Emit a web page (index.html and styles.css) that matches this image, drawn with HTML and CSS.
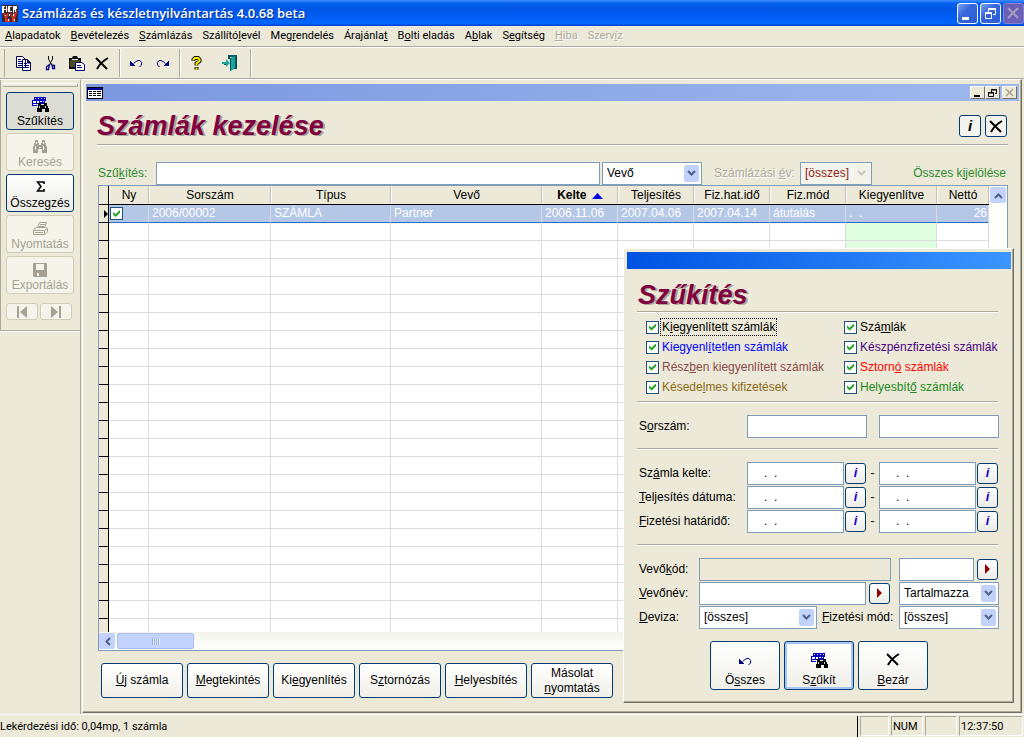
FILE: index.html
```html
<!DOCTYPE html>
<html lang="hu">
<head>
<meta charset="utf-8">
<title>Számlázás és készletnyilvántartás</title>
<link rel="stylesheet" href="styles.css">
</head>
<body>
<svg class="defs" aria-hidden="true">
  <symbol id="i-find" viewBox="0 0 17 16"><path fill="#0000c8" d="M2 0h12v4H13v3H1V9H0V3h2z"/><path fill="#fff" d="M3 1h1v1H3zM6 1h1v1H6zM9 1h1v1H9zM12 1h1v1h-1zM1 4h3v2H1zM5 4h2v2H5zM8 4h2v1H8zM11 4h1v1h-1zM1 7h3v1H1z"/><path fill="#0000c8" d="M0 8h5v1H0z"/><path fill="#000" d="M6 6h3v2h3V6h3v3h1v2h1v4h-4v-3h-3v3H5v-4h1z"/><path fill="#ccc" d="M7 9h1v2H7zM13 9h1v2h-1z"/></symbol>
  <symbol id="i-bino" viewBox="0 0 16 14"><path fill="currentColor" d="M3 0h3v3h1v2h2V3h1V0h3v3h1v3h1v7h-5V9H6v4H1V6h1V3h1z"/><path fill="#f4f3ea" d="M4 2h1v2H4zM3 6h1v4H3zM11 2h1v2h-1zM11 6h1v4h-1zM7 7h2v1H7z"/></symbol>
  <symbol id="i-x" viewBox="0 0 14 13"><path d="M1 1l11 11M13 1C8 4 4 8 2 12" fill="none" stroke="currentColor" stroke-width="2"/></symbol>
  <symbol id="i-undo" viewBox="0 0 13 9"><path fill="#000080" d="M0 2h1v1h1v1h1v1h1v1h1v1H0z"/><path d="M3.500 4.500L6 2.500Q8 1 10 1.500Q12.500 3 11.500 6L9.500 8" fill="none" stroke="#000080" stroke-width="1"/></symbol>
  <symbol id="i-down" viewBox="0 0 9 7"><path d="M1 1l3.500 3.500L8 1" fill="none" stroke="currentColor" stroke-width="2"/></symbol>
</svg>
<div class="app">
  <header class="titlebar">
    <svg class="logo" viewBox="0 0 16 17"><path fill="#382828" d="M0 0h16v17H0z"/><path fill="#fff" d="M0 1h3v1H2v2h2V1h1v6H4V5H2v3H0zM6 1h4v1H8v4h2v1H6zM11 1h4v3h-1v3h-1V5h-1v3h-1z"/><path fill="#d83028" d="M1 9l2-1 1 3 1-3h2l-2 5v4H3v-4zM8 8l2 1 1 3 1-4h3l-2 6v3h-3v-3zM5 3h1v3H5zM14 5h1v3h-1zM5 14h3v3H5z"/><path fill="#fff" d="M3 10h1v1H3zM7 9h1v2H7zM11 9h1v2h-1zM6 14h1v2H6zM12 14h1v2h-1z"/></svg>
    <h1 class="app-name">Számlázás és készletnyilvántartás 4.0.68 beta</h1>
    <div class="caption-buttons">
      <button class="cap" aria-label="Kis méret"><svg viewBox="0 0 19 19"><path fill="#fff" d="M4 13h7v3H4z"/></svg></button>
      <button class="cap" aria-label="Visszaállítás"><svg viewBox="0 0 19 19"><path fill="none" stroke="#fff" d="M7.500 8V4.500h7v6H12M7 5.500h8M4.500 8.500h6v6h-6zM4 9.500h7"/></svg></button>
      <button class="cap cap-off" aria-label="Bezárás" disabled><svg viewBox="0 0 19 19"><path stroke="#a99cc4" stroke-width="2" d="M4 4l10 10M14 4L4 14"/></svg></button>
    </div>
  </header>
  <nav class="menubar">
    <button><u>A</u>lapadatok</button><button><u>B</u>evételezés</button><button><u>S</u>zámlázás</button><button>Szállító<u>l</u>evél</button><button>Meg<u>r</u>endelés</button><button>Árajánla<u>t</u></button><button>B<u>o</u>lti eladás</button><button>A<u>b</u>lak</button><button>S<u>e</u>gítség</button><button disabled><u>H</u>iba</button><button disabled>Szerv<u>í</u>z</button>
  </nav>
  <div class="toolbar">
    <div class="tool-group first">
      <button aria-label="Másolás"><svg width="16" height="15" viewBox="0 0 16 15"><path fill="#fff" stroke="#000050" d="M.5.500h6l3 3v8h-9zM6.500 3.500h5l3 3v8h-8z"/><path stroke="#000080" d="M2 3.500h3M2 5.500h4M2 7.500h4M2 9.500h4M8 7.500h3M8 9.500h5M8 11.500h5M11.500 4v3H15"/></svg></button>
      <button aria-label="Kivágás"><svg width="11" height="15" viewBox="0 0 11 15"><path fill="none" stroke="#111" d="M3.500 0v3l3 6M7.500 0v3l-3 6"/><path fill="none" stroke="#000080" stroke-width="1.300" d="M4.500 8L4 10.500 3.500 13.500H1.500V10.500L4 9M6.500 7.500L7 9.500H9.500V12.500H7.500V9.500"/></svg></button>
      <button aria-label="Beillesztés"><svg width="17" height="15" viewBox="0 0 17 15"><path fill="#111" d="M1 2h3l1-2h4l1 2h3v11H1z"/><path fill="#4b4b20" d="M2 4h10v7H2z"/><path fill="#ddd" d="M4 3h6v1H4z"/><path fill="#fff" stroke="#000080" d="M7.500 6.500h6l3 2v6h-9z"/><path stroke="#000080" d="M9 9.500h4M9 11.500h5"/></svg></button>
      <button aria-label="Törlés"><svg width="14" height="13"><use href="#i-x"/></svg></button>
    </div>
    <div class="tool-group second">
      <button aria-label="Visszavonás"><svg width="13" height="9"><use href="#i-undo"/></svg></button>
      <button aria-label="Mégis"><svg class="flip" width="13" height="9"><use href="#i-undo"/></svg></button>
    </div>
    <div class="tool-group last">
      <button aria-label="Súgó"><svg width="11" height="15" viewBox="0 0 11 15"><path d="M2.500 5V3.500L4 2h3l1.500 1.500V5L5.500 7.500V9.500M5.500 11v2.500" fill="none" stroke="#111" stroke-width="4"/><path d="M2.500 4.500V3.500L4 2h3l1.500 1.500V5L5.500 7.500V9.500M5.500 11.500v2" fill="none" stroke="#f4ee00" stroke-width="2"/></svg></button>
      <button aria-label="Kilépés"><svg width="16" height="16" viewBox="0 0 16 16"><path fill="#0a5d60" d="M6 0h9v14h-3V2H6z"/><path fill="#19a5a0" d="M8 3l5-2v12l-4 3H8zM0 7h4V4l4 4-4 4V9H0z"/><path fill="#084848" d="M6 1h2v3H6zM8 3h1v12H8zM14 1h1v13h-1zM2 9h2v1H2z"/></svg></button>
    </div>
  </div>
  <div class="workspace">
    <aside class="sidebar">
      <div class="side-panel">
        <div class="grip"></div>
        <button class="side-btn pressed"><svg width="17" height="16"><use href="#i-find"/></svg>Szűkítés</button>
        <button class="side-btn" disabled><svg width="16" height="14"><use href="#i-bino"/></svg>Keresés</button>
        <button class="side-btn sum"><svg width="9" height="11" viewBox="0 0 9 11"><path d="M8 3V1H1.500L5 5.500 1.500 10H8V8" fill="none" stroke="#000" stroke-width="1.600"/></svg>Összegzés</button>
        <button class="side-btn" disabled><svg width="16" height="14" viewBox="0 0 16 14"><path fill="none" stroke="currentColor" d="M5.500 5.500L7.500.500h7l-2 5M8 2.500h5M7 4.500h5M1.500 7.500l3-2h9l2 1v3l-3 3h-11zM1.500 8.500h11v4M13 8l2-1M3 10.500h8"/></svg>Nyomtatás</button>
        <button class="side-btn" disabled><svg width="14" height="14" viewBox="0 0 14 14"><path fill="currentColor" fill-rule="evenodd" d="M0 0h14v14H1L0 13zM3 1v6h8V1zM4 10v3h2v-3z"/></svg>Exportálás</button>
        <div class="nav-pair">
          <button disabled aria-label="Első"><svg width="12" height="12" viewBox="0 0 12 12"><path fill="currentColor" d="M1 0h2v12H1zM11 0v12L4 6z"/></svg></button>
          <button disabled aria-label="Utolsó"><svg width="12" height="12" viewBox="0 0 12 12"><path fill="currentColor" d="M9 0h2v12H9zM1 0v12l7-6z"/></svg></button>
        </div>
      </div>
    </aside>
    <main class="window">
      <div class="window-title">
        <svg width="16" height="12" viewBox="0 0 16 12"><path fill="#000" d="M0 0h16v12H0z"/><path fill="#0000a0" d="M1 1h14v2H1z"/><path fill="#fff" d="M1 3h14v8H1z"/><path fill="#000" d="M2 4h3v1H2zM6 4h3v1H6zM10 4h4v1h-4zM2 6h3v1H2zM6 6h3v1H6zM10 6h4v1h-4zM2 8h3v1H2zM6 8h3v1H6zM10 8h4v1h-4z"/></svg>
        <div class="mini-buttons">
          <button aria-label="Kis méret"><svg viewBox="0 0 13 11"><path fill="#000" d="M3 8h6v2H3z"/></svg></button>
          <button aria-label="Visszaállítás"><svg viewBox="0 0 13 11"><path fill="none" stroke="#000" d="M5.500 5V2.500h5v4H9M5 3h6M2.500 5.500h5v4h-5zM2 6h6"/></svg></button>
          <button class="apart" disabled aria-label="Bezárás"><svg viewBox="0 0 13 11"><path stroke="#aaa58f" stroke-width="1.500" d="M3 2l7 7M10 2L3 9"/></svg></button>
        </div>
      </div>
      <div class="window-body">
        <div class="heading-row">
          <h2>Számlák kezelése</h2>
          <button class="square info-dark">i</button>
          <button class="square" aria-label="Bezár"><svg width="14" height="13"><use href="#i-x"/></svg></button>
        </div>
        <div class="filter-row">
          <label class="green" for="q">Szű<u>k</u>ítés:</label>
          <input id="q" class="box grow" type="text">
          <span class="select w100"><select aria-label="Mező"><option>Vevő</option></select><svg><use href="#i-down"/></svg></span>
          <label class="muted year" for="year">Számlázási <u>é</u>v:</label>
          <span class="select off w72"><select id="year" disabled><option>[összes]</option></select><svg><use href="#i-down"/></svg></span>
          <a class="green" href="#">Összes k<u>i</u>jelölése</a>
        </div>
        <div class="grid">
          <div class="grid-main">
            <div class="grid-view">
              <table>
                <colgroup><col class="c10"><col class="c40"><col class="c122"><col class="c120"><col><col class="c76"><col class="c76"><col class="c76"><col class="c76"><col class="c91"><col class="c52"></colgroup>
                <thead><tr><th></th><th>Ny</th><th>Sorszám</th><th>Típus</th><th>Vevő</th><th class="sorted">Kelte <svg width="11" height="6" viewBox="0 0 11 6"><path fill="#0000e0" d="M5.500 0L11 6H0z"/></svg></th><th>Teljesítés</th><th>Fiz.hat.idő</th><th>Fiz.mód</th><th>Kiegyenlítve</th><th>Nettó</th></tr></thead>
                <tbody id="rows">
                  <tr class="selected"><td><svg width="4" height="8" viewBox="0 0 4 8"><path d="M0 0l4 4-4 4z"/></svg></td><td><input type="checkbox" checked aria-label="Kijelölve"></td><td>2006/00002</td><td>SZÁMLA</td><td>Partner</td><td>2006.11.06</td><td>2007.04.06</td><td>2007.04.14</td><td>átutalás</td><td>.&nbsp; .</td><td class="num">26</td></tr>
                </tbody>
              </table>
            </div>
            <div class="vscroll"><button aria-label="Fel"><svg class="up" width="9" height="7"><use href="#i-down"/></svg></button></div>
          </div>
          <div class="hscroll"><button aria-label="Balra"><svg class="left" width="9" height="7"><use href="#i-down"/></svg></button><div class="thumb"></div></div>
        </div>
        <div class="actions">
          <button class="push"><span><u>Ú</u>j számla</span></button><button class="push"><span><u>M</u>egtekintés</span></button><button class="push"><span>Ki<u>e</u>gyenlítés</span></button><button class="push"><span>S<u>z</u>tornózás</span></button><button class="push"><span><u>H</u>elyesbítés</span></button><button class="push"><span>Másolat <u>n</u>yomtatás</span></button>
        </div>
      </div>
    </main>
    <section class="dialog" role="dialog" aria-label="Szűkítés">
      <div class="dialog-title"></div>
      <div class="dialog-body">
        <div class="dialog-head"><h2>Szűkítés</h2></div>
        <div class="checks">
          <label class="focused"><input type="checkbox" checked><span>K<u>i</u>egyenlített számlák</span></label>
          <label><input type="checkbox" checked><span>Szá<u>m</u>lák</span></label>
          <label class="blue"><input type="checkbox" checked><span>Kiegyenl<u>í</u>tetlen számlák</span></label>
          <label class="purple"><input type="checkbox" checked><span>Készpénzfizetési számlák</span></label>
          <label class="brown"><input type="checkbox" checked><span>Rész<u>b</u>en kiegyenlített számlák</span></label>
          <label class="red"><input type="checkbox" checked><span>Sztorn<u>ó</u> számlák</span></label>
          <label class="olive"><input type="checkbox" checked><span>Késede<u>l</u>mes kifizetések</span></label>
          <label class="leaf"><input type="checkbox" checked><span>Helyesbít<u>ő</u> számlák</span></label>
        </div>
        <div class="fields">
          <div class="field spread"><label for="s1">S<u>o</u>rszám:</label><input id="s1" class="box w120" type="text"><input class="box w120" type="text" aria-label="Sorszám vége"></div>
        </div>
        <div class="fields dates">
          <div class="field"><label class="wide" for="d1">Sz<u>á</u>mla kelte:</label><input id="d1" class="box date" value=".  ."><button class="mini">i</button><span class="dash">-</span><input class="box date" value=".  ." aria-label="Számla kelte vége"><button class="mini">i</button></div>
          <div class="field"><label class="wide" for="d2"><u>T</u>eljesítés dátuma:</label><input id="d2" class="box date" value=".  ."><button class="mini">i</button><span class="dash">-</span><input class="box date" value=".  ." aria-label="Teljesítés vége"><button class="mini">i</button></div>
          <div class="field"><label class="wide" for="d3"><u>F</u>izetési határidő:</label><input id="d3" class="box date" value=".  ."><button class="mini">i</button><span class="dash">-</span><input class="box date" value=".  ." aria-label="Fizetési határidő vége"><button class="mini">i</button></div>
        </div>
        <div class="fields">
          <div class="field"><label class="short" for="k">Vevő<u>k</u>ód:</label><input id="k" class="box grow" disabled><input class="box w75" aria-label="Kód"><button class="mini arrow" aria-label="Keres"><svg width="5" height="10" viewBox="0 0 5 10"><path fill="#900000" d="M0 0l5 5-5 5z"/></svg></button></div>
          <div class="field"><label class="short" for="n"><u>V</u>evőnév:</label><input id="n" class="box grow"><button class="mini arrow" aria-label="Keres"><svg width="5" height="10" viewBox="0 0 5 10"><path fill="#900000" d="M0 0l5 5-5 5z"/></svg></button><span class="select w100 after"><select aria-label="Egyezés"><option>Tartalmazza</option></select><svg><use href="#i-down"/></svg></span></div>
          <div class="field"><label class="short" for="dev"><u>D</u>eviza:</label><span class="select grow"><select id="dev"><option>[összes]</option></select><svg><use href="#i-down"/></svg></span><label class="mode" for="mode"><u>F</u>izetési mód:</label><span class="select w100"><select id="mode"><option>[összes]</option></select><svg><use href="#i-down"/></svg></span></div>
        </div>
        <div class="dialog-buttons">
          <button class="push tall"><svg width="13" height="9"><use href="#i-undo"/></svg><span>Ö<u>s</u>szes</span></button>
          <button class="push tall default"><svg width="17" height="16"><use href="#i-find"/></svg><span>S<u>z</u>űkít</span></button>
          <button class="push tall"><svg width="14" height="13"><use href="#i-x"/></svg><span><u>B</u>ezár</span></button>
        </div>
      </div>
    </section>
  </div>
  <footer class="statusbar">
    <span class="status-text">Lekérdezési idő: 0,04mp, 1 számla</span>
    <span class="cell"></span><span class="cell num-lock">NUM</span><span class="cell lock"></span><span class="cell clock">12:37:50</span>
  </footer>
</div>
<script src="rows.js"></script>
</body>
</html>
```
FILE: styles.css
```css
* { box-sizing: border-box; }
body { margin: 0; background: #ece9d8; color: #000; font: 12px/14px "Liberation Sans", Arial, sans-serif; }
button, input, select { font: inherit; color: inherit; margin: 0; padding: 0; }
h1, h2 { margin: 0; }
svg { display: block; flex: none; }
.defs { position: absolute; width: 0; height: 0; }
.app { display: flex; flex-direction: column; height: 100vh; overflow: hidden; }

.titlebar { display: flex; align-items: center; height: 26px; padding: 0 0 0 2px; background: linear-gradient(#3a90ff, #0862ee 12%, #0055e5 35%, #0061fb 75%, #0066ff 90%, #003fd0); color: #fff; }
.logo { width: 16px; height: 17px; }
.app-name { flex: 1; margin-left: 4px; font: 600 13px/18px "Open Sans", "Noto Sans", sans-serif; text-shadow: 1px 1px #0a3090; }
.caption-buttons { display: flex; gap: 2px; }
.cap { width: 21px; height: 21px; padding: 0; border: 1px solid #fff; border-radius: 3px; background: linear-gradient(135deg, #7ba2ef, #3767dc 40%, #2c5bd5); }
.cap-off { border-color: #8a7fd0; background: #6a60b5; }

.menubar { display: flex; gap: 10px; height: 22px; padding: 1px 5px 0; border-bottom: 1px solid #fff; box-shadow: inset 0 -1px #aca899; font: 11px/17px Roboto, "Noto Sans", sans-serif; }
.menubar button { border: 0; background: none; height: 17px; white-space: nowrap; }
.menubar button:disabled { color: #aca899; text-shadow: 1px 1px #fff; }

.toolbar { display: flex; height: 31px; padding: 1px 0 1px 4px; border-bottom: 1px solid #aca899; }
.tool-group { display: flex; align-items: center; height: 28px; border-right: 1px solid #aca899; box-shadow: 1px 0 #fff; padding-left: 3px; }
.tool-group button { display: flex; align-items: center; justify-content: center; width: 26px; height: 26px; border: 0; background: none; }
.tool-group.first { width: 116px; border-left: 1px solid #aca899; padding-left: 6px; }
.tool-group.second { width: 60px; }
.tool-group.last { width: 71px; gap: 8px; }
.flip { transform: scaleX(-1); }

.workspace { position: relative; display: flex; flex: 1; min-height: 0; }
.sidebar { width: 81px; border-right: 1px solid #aca899; border-top: 1px solid #fff; }
.side-panel { display: flex; flex-direction: column; gap: 3px; padding: 3px 6px 10px; border-left: 1px solid #aca899; border-bottom: 1px solid #aca899; box-shadow: 0 1px #fff; }
.grip { height: 4px; margin: 0 -4px 2px; border-bottom: 1px solid #aca899; border-right: 1px solid #aca899; border-top: 1px solid #fff; }
.side-btn { display: flex; flex-direction: column; align-items: center; justify-content: flex-end; gap: 1px; height: 38px; margin-left: -1px; border: 1px solid #003c74; border-radius: 3px; background: linear-gradient(#fff, #ecebe5); white-space: nowrap; padding-bottom: 1px; }
.side-btn.sum { gap: 4px; }
.side-btn.pressed { background: #dddcd4; }
.side-btn:disabled, .nav-pair button:disabled { border-color: #d0cdb9; background: #f5f4ea; color: #a5a293; }
.nav-pair { display: flex; gap: 2px; margin: 6px 2px 0 -1px; }
.nav-pair button { display: flex; flex: 1; align-items: center; justify-content: center; height: 17px; border: 1px solid; border-radius: 3px; }

.window { display: flex; flex: 1; flex-direction: column; min-width: 0; margin: 0 2px 1px 1px; padding: 4px 2px 2px 3px; border: 1px solid; border-color: #fff #716f64 #716f64 #fff; box-shadow: inset -1px -1px #aca899; }
.window-title { display: flex; align-items: center; justify-content: space-between; height: 17px; padding: 0 2px 0 1px; background: linear-gradient(90deg, #7b97e0, #9eb9ee); }
.mini-buttons { display: flex; }
.mini-buttons button { width: 15px; height: 13px; border: 1px solid; border-color: #fff #716f64 #716f64 #fff; background: #ece9d8; }
.mini-buttons .apart { margin-left: 2px; }
.window-body { display: flex; flex: 1; flex-direction: column; min-height: 0; padding: 0 11px 12px; }
.heading-row { display: flex; align-items: center; gap: 4px; height: 45px; padding: 6px 1px 0 0; border-bottom: 1px solid #fff; box-shadow: inset 0 -1px #aca899; }
h2 { flex: 1; font: italic bold 27px/32px "Liberation Sans", Arial, sans-serif; color: #800040; text-shadow: 2px 1px #a9a69b; }
.square { display: flex; align-items: center; justify-content: center; width: 22px; height: 22px; border: 1px solid #003c74; border-radius: 3px; background: #f4f3ee; }
.info-dark { font: italic bold 15px/18px "Liberation Sans", Arial, sans-serif; }
.filter-row { display: flex; align-items: center; height: 24px; margin-top: 15px; }
.filter-row > label:first-child { width: 59px; padding-left: 1px; }
.filter-row .grow { margin-right: 2px; }
.filter-row label.year { width: 98px; padding-left: 12px; white-space: nowrap; }
.filter-row a { width: 136px; padding-right: 2px; text-align: right; text-decoration: none; white-space: nowrap; }
.green { color: #2f8a2f; }
.muted { color: #aca899; text-shadow: 1px 1px #fff; }
.grow { flex: 1; min-width: 0; }
.w72 { width: 72px; } .w75 { width: 75px; } .w100 { width: 100px; } .w120 { width: 120px; }

.box { height: 23px; padding: 0 4px; border: 1px solid #7f9db9; background: #fff; border-radius: 0; }
.box:disabled { background: #ece9d8; }
.select { position: relative; display: block; height: 23px; }
.select select { appearance: none; width: 100%; height: 23px; padding: 0 18px 0 4px; border: 1px solid #7f9db9; border-radius: 0; background: #fff; }
.select svg { position: absolute; top: 3px; right: 3px; width: 15px; height: 17px; padding: 5px 3px; border-radius: 2px; background: #c1d3fb; color: #4d6185; pointer-events: none; }
.select.off select { background: #f5f4ea; color: #8c1c1c; opacity: 1; padding-right: 0; }
.select.off svg { background: #f3f2ea; color: #c9c7ba; }
input[type="checkbox"] { appearance: none; position: relative; flex: none; width: 13px; height: 13px; border: 1px solid #1c5180; background: #fff; }
input[type="checkbox"]::after { content: ""; position: absolute; inset: 2px; background: #21a121; clip-path: polygon(0 28%, 36% 62%, 100% 0, 100% 38%, 36% 100%, 0 64%); }

.grid { display: flex; flex: 1; flex-direction: column; min-height: 0; margin-left: 1px; border: 1px solid #7f9db9; background: #fff; }
.grid-main { display: flex; flex: 1; min-height: 0; }
.grid-view { flex: 1; min-width: 0; overflow: hidden; }
table { width: 100%; table-layout: fixed; border-collapse: separate; border-spacing: 0; }
.c10 { width: 10px; } .c40 { width: 40px; } .c52 { width: 52px; } .c76 { width: 76px; } .c91 { width: 91px; } .c120 { width: 120px; } .c122 { width: 122px; }
th { height: 19px; padding: 0; border-bottom: 1px solid #000; background: #ece9d8; box-shadow: inset -1px 0 #c5c2b2, inset 1px 0 #fff; font-weight: normal; white-space: nowrap; }
th.sorted { font-weight: bold; }
th svg { display: inline-block; margin-left: 2px; }
td { height: 18px; padding: 0 3px; border-right: 1px solid #dcdcdc; border-bottom: 1px solid #dcdcdc; line-height: 17px; white-space: nowrap; }
tr > :first-child { padding: 0 0 0 5px; border-right: 1px solid #000; box-shadow: none; }
td:first-child { border-bottom-color: #000; background: #ece9d8; }
td:nth-child(2) { padding: 0 1px; }
td:nth-child(10) { background: #e0ffe0; }
.selected td:not(:first-child) { border-bottom-color: #316ac5; background: #b5c7e7; color: #fff; }
.selected input { display: block; }
td.num { padding: 0 1px; text-align: right; }
.vscroll { width: 18px; padding: 1px; background: #fdfdfa; }
.vscroll button, .hscroll button { display: flex; align-items: center; justify-content: center; width: 16px; height: 16px; border: 0; border-radius: 2px; background: #c3d3fd; color: #4d6185; }
.hscroll { display: flex; gap: 2px; height: 18px; padding: 1px 0; background: linear-gradient(#f3f3ec, #fff); }
.left { transform: rotate(-90deg) scaleY(-1); } .up { transform: rotate(180deg); }
.thumb { width: 77px; border: 1px solid #a9bff0; border-radius: 2px; background: repeating-linear-gradient(90deg, #8fadee 0 1px, #e6eeff 1px 2px) center / 8px 7px no-repeat #c3d3fd; }

.actions { display: flex; gap: 4px; margin: 12px 0 0 4px; }
.push { display: flex; align-items: center; justify-content: center; width: 82px; height: 35px; padding: 0 8px; border: 1px solid #003c74; border-radius: 3px; background: linear-gradient(#fff, #f0efe8); line-height: 15px; }

.dialog { position: absolute; top: 169px; right: 10px; width: 391px; padding: 3px 2px 2px 3px; border: 1px solid; border-color: #fff #716f64 #716f64 #fff; box-shadow: inset -1px -1px #aca899; background: #ece9d8; }
.dialog-title { height: 17px; background: linear-gradient(90deg, #0052e2, #3d95ff); }
.dialog-body { padding: 0 12px 10px 10px; }
.dialog-head, .checks, .fields { margin-right: 1px; border-bottom: 1px solid #fff; box-shadow: inset 0 -1px #aca899; }
.dialog-head { padding: 10px 0 1px 1px; }
.checks { display: grid; grid-template-columns: 198px 1fr; grid-auto-rows: 20px; padding: 4px 0 5px 9px; }
.checks label { display: flex; align-items: center; gap: 2px; white-space: nowrap; }
.checks span { padding: 1px; }
.focused span { outline: 1px dotted #000; }
.blue { color: #0000ff; } .purple { color: #4b0082; } .brown { color: #8b4a4a; } .red { color: #ff0000; } .olive { color: #8b6914; } .leaf { color: #228b22; }
.fields { padding: 11px 0; }
.dates { padding-bottom: 12px; }
.fields:nth-of-type(5) { border: 0; box-shadow: none; padding-bottom: 12px; }
.field { display: flex; align-items: center; height: 24px; margin: 0 -1px 0 2px; white-space: nowrap; }
.spread { gap: 12px; }
.spread label { flex: 1; }
.wide { width: 108px; flex: none; } .short { width: 60px; }
.date { flex: none; width: 97px; padding-left: 16px; white-space: pre; }
.mini { display: flex; flex: none; align-items: center; justify-content: center; width: 21px; height: 21px; margin-left: 1px; border: 1px solid #003c74; border-radius: 3px; background: linear-gradient(#fff, #ecebe5); color: #2000c8; font: italic bold 13px/16px "Liberation Sans", Arial, sans-serif; }
.arrow { margin: 0 1px 0 3px; }
.dash { flex: none; width: 13px; text-align: center; }
#k { margin-right: 8px; }
.after { margin-left: 8px; }
.mode { width: 82px; padding-left: 5px; }
.dialog-buttons { display: flex; gap: 4px; margin-left: 73px; }
.tall { flex-direction: column; justify-content: flex-end; gap: 7px; width: 70px; height: 49px; padding-bottom: 1px; }
.default { gap: 4px; box-shadow: inset 0 0 0 2px #a9c5f5; }

.statusbar { display: flex; gap: 2px; height: 23px; padding: 1px 1px 0 0; border-top: 1px solid #fff; font: 11px/22px Roboto, "Noto Sans", sans-serif; }
.status-text { flex: 1; border-right: 1px solid #000; }
.cell { width: 29px; height: 20px; padding: 0 1px; border: 1px solid; border-color: #aca899 #fff #fff #aca899; line-height: 20px; }
.num-lock, .lock { width: 32px; }
.clock { width: 64px; }
```
FILE: rows.js
```js
// Fill the visible part of the invoice grid with empty rows.
const body = document.getElementById("rows");
for (let r = 0; r < 23; r++) {
  const row = body.insertRow();
  for (let c = 0; c < 11; c++) row.insertCell();
}
```
